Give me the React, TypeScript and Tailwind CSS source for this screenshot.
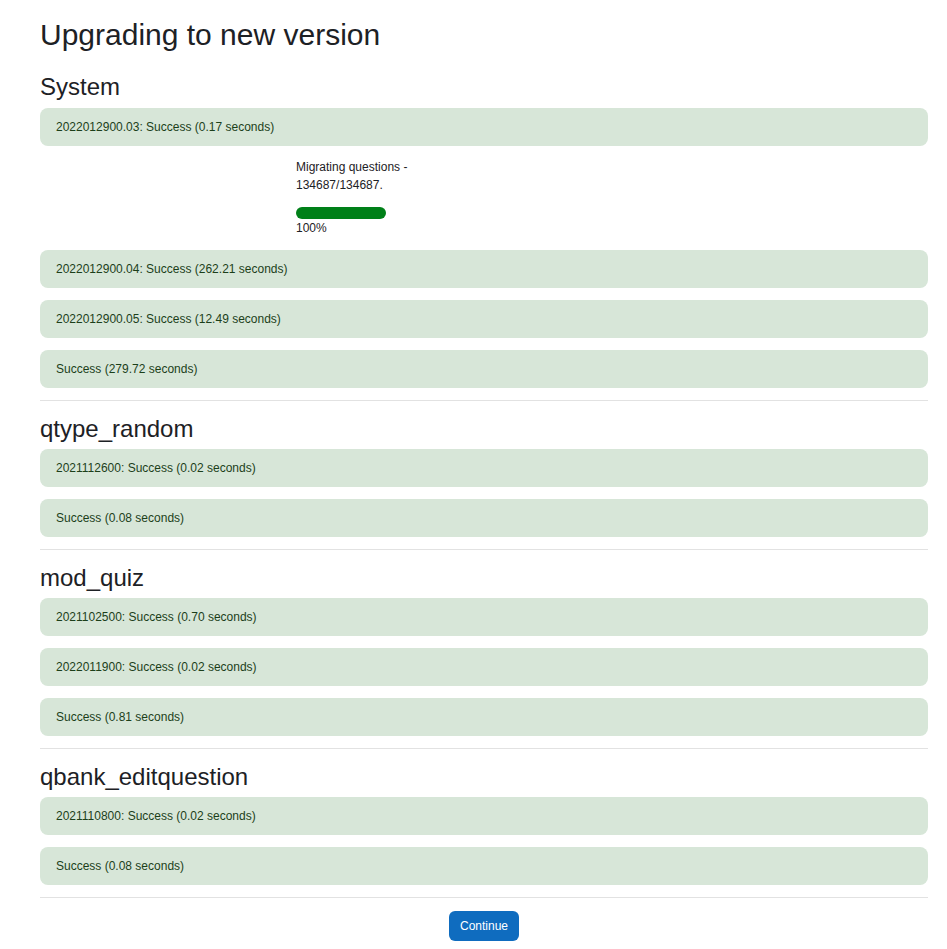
const sections = [
    {
        name: 'System',
        rows: ['2022012900.03: Success (0.17 seconds)', '2022012900.04: Success (262.21 seconds)', '2022012900.05: Success (12.49 seconds)', 'Success (279.72 seconds)'],
        progressAfter: 0,
    },
    {
        name: 'qtype_random',
        rows: ['2021112600: Success (0.02 seconds)', 'Success (0.08 seconds)'],
    },
    {
        name: 'mod_quiz',
        rows: ['2021102500: Success (0.70 seconds)', '2022011900: Success (0.02 seconds)', 'Success (0.81 seconds)'],
    },
    {
        name: 'qbank_editquestion',
        rows: ['2021110800: Success (0.02 seconds)', 'Success (0.08 seconds)'],
    },
];

const Notice = ({ text }: { text: string }) => (
    <div className="flex h-[38px] items-center rounded-lg bg-[#d7e6d8] px-4 text-[12px] text-[#1c3f1a]">{text}</div>
);

const Progress = () => (
    <div className="mx-auto w-[376px] text-[12px] leading-[18px] text-[#1d2125]">
        <p>
            Migrating questions -
            <br />
            134687/134687.
        </p>
        <div className="mt-[13px] h-3 w-[90px] rounded-full bg-[#008018]" />
        <p className="mb-px">100%</p>
    </div>
);

export default function App() {
    return (
        <div className="min-h-screen bg-white font-['Liberation_Sans',Arial,sans-serif] text-[#1d2125]">
            <div className="mx-[40px] w-[888px] pb-2 pt-[17px]">
                <h2 className="text-[30px] leading-9">Upgrading to new version</h2>
                {sections.map((s, i) => (
                    <div key={s.name} className={i === 0 ? 'mt-[18px]' : 'mt-3 border-t border-[#e2e2e2] pt-3'}>
                        <h3 className="text-[24px] leading-[31px]">{s.name}</h3>
                        <div className={`${i === 0 ? 'mt-[6px]' : 'mt-[5px]'} flex flex-col gap-3`}>
                            {s.rows.map((r, j) => (
                                <div key={r} className="flex flex-col gap-3">
                                    <Notice text={r} />
                                    {s.progressAfter === j && <Progress />}
                                </div>
                            ))}
                        </div>
                    </div>
                ))}
                <div className="mt-3 flex justify-center border-t border-[#e2e2e2] pt-[13px]">
                    <button className="h-[30px] rounded-md bg-[#0f6cbf] px-[11px] text-[12px] text-white">Continue</button>
                </div>
            </div>
        </div>
    );
}
